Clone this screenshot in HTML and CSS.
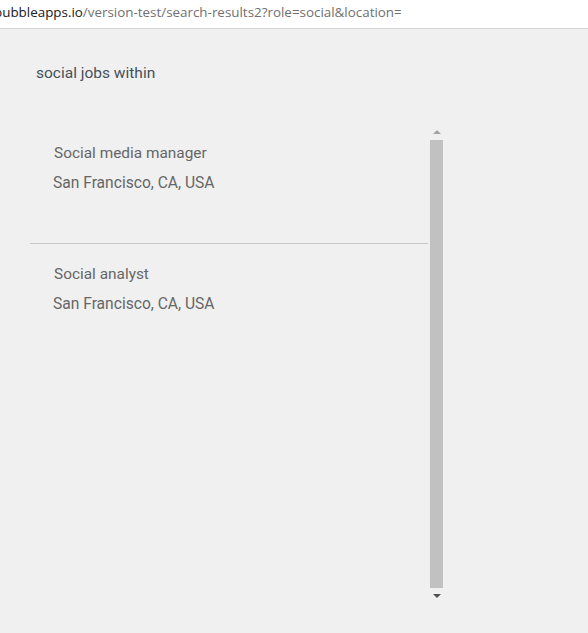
FILE: index.html
```html
<!DOCTYPE html>
<html>
<head>
<meta charset="utf-8">
<link rel="stylesheet" href="styles.css">
</head>
<body>
<div class="addr"><span class="host">bubbleapps.io</span><span class="path">/version-test/search-results2?role=social&amp;location=</span></div>
<main class="page">
  <h1 class="heading">social jobs within</h1>
  <div class="results">
    <div class="list">
      <div class="item">
        <div class="title">Social media manager</div>
        <div class="loc">San Francisco, CA, USA</div>
      </div>
      <div class="item">
        <div class="title">Social analyst</div>
        <div class="loc">San Francisco, CA, USA</div>
      </div>
    </div>
    <div class="scrollbar">
      <div class="arrow up"></div>
      <div class="thumb"></div>
      <div class="arrow down"></div>
    </div>
  </div>
</main>
</body>
</html>
```
FILE: styles.css
```css
html, body {
  margin: 0;
  padding: 0;
}
body {
  background: #f0f0f0;
  width: 588px;
  height: 633px;
  overflow: hidden;
  font-family: Roboto, "Liberation Sans", sans-serif;
}
.addr {
  height: 28px;
  background: #ffffff;
  border-bottom: 1px solid #d6d6d6;
  font-family: "Open Sans", "Liberation Sans", sans-serif;
  font-size: 13.4px;
  line-height: 24px;
  white-space: nowrap;
  margin-left: -6px;
}
.host { color: #202020; }
.path { color: #707070; }
.page {
  padding: 34px 0 0 30px;
}
.heading {
  margin: 0 0 0 6px;
  font-size: 15.5px;
  font-weight: 400;
  color: #45505a;
  line-height: 20px;
}
.results {
  display: flex;
  margin-top: 44px;
  height: 477px;
}
.list {
  width: 398px;
}
.item {
  height: 116px;
  padding: 15px 0 0 0;
  box-sizing: border-box;
}
.item + .item {
  border-top: 1px solid #c8c8c8;
  padding-top: 19px;
}
.title {
  margin-left: 24px;
  font-size: 15.4px;
  color: #666666;
  line-height: 20px;
  padding-top: 1px;
}
.loc {
  margin-left: 23px;
  margin-top: 10px;
  font-size: 15.6px;
  color: #666666;
  line-height: 20px;
}
.scrollbar {
  width: 17px;
  display: flex;
  flex-direction: column;
  align-items: center;
}
.arrow {
  width: 0;
  height: 0;
  border-left: 4px solid transparent;
  border-right: 4px solid transparent;
}
.arrow.up {
  border-bottom: 4px solid #a3a3a3;
  margin-top: 3px;
  margin-bottom: 6px;
}
.arrow.down {
  border-top: 4px solid #505050;
  margin-top: 6px;
}
.thumb {
  width: 13px;
  height: 448px;
  background: #c1c1c1;
}
```
